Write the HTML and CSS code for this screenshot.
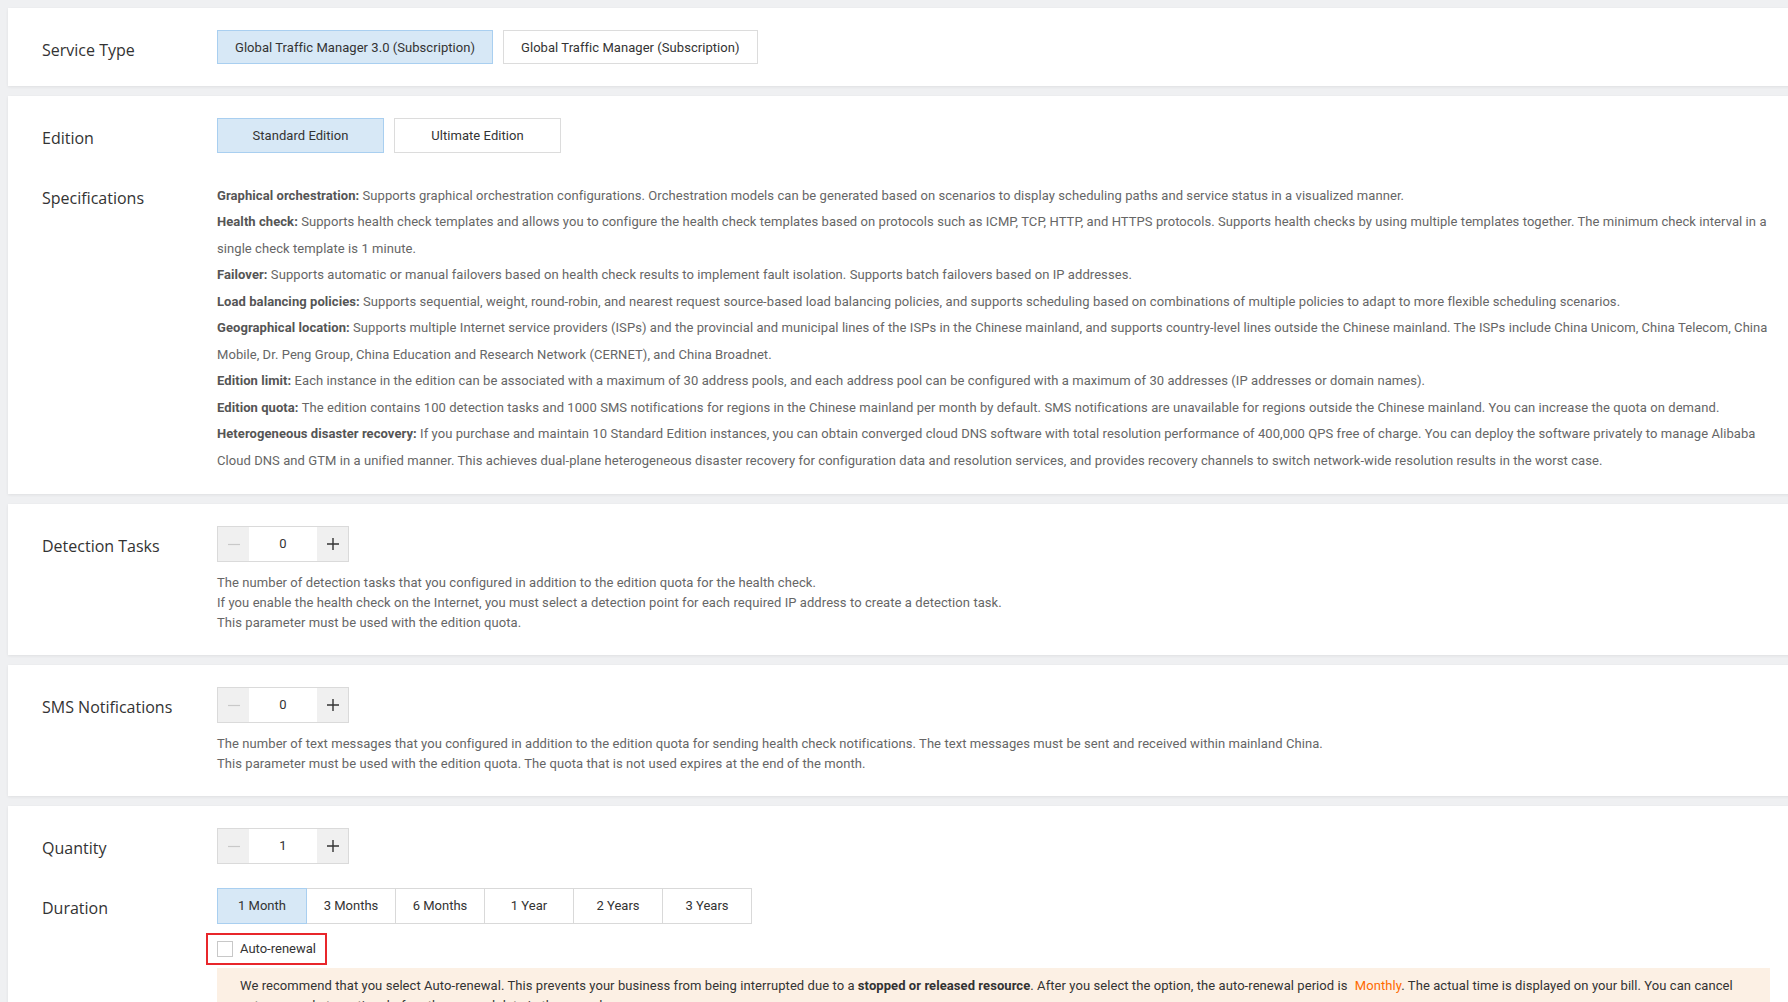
FILE: index.html
```html
<!DOCTYPE html>
<html lang="en">
<head>
<meta charset="utf-8">
<title>Global Traffic Manager</title>
<link rel="stylesheet" href="styles.css">
</head>
<body>
<div class="page">
  <section class="card">
    <div class="row">
      <div class="label">Service Type</div>
      <div class="content">
        <div class="opts">
          <div class="opt active">Global Traffic Manager 3.0 (Subscription)</div>
          <div class="opt">Global Traffic Manager (Subscription)</div>
        </div>
      </div>
    </div>
  </section>

  <section class="card card-edition">
    <div class="row">
      <div class="label">Edition</div>
      <div class="content">
        <div class="opts">
          <div class="opt opt-edition active">Standard Edition</div>
          <div class="opt opt-edition">Ultimate Edition</div>
        </div>
      </div>
    </div>
    <div class="row row-specs">
      <div class="label label-specs">Specifications</div>
      <div class="content">
        <div class="specs">
          <p><b>Graphical orchestration:</b> Supports graphical orchestration configurations. Orchestration models can be generated based on scenarios to display scheduling paths and service status in a visualized manner.</p>
          <p><b>Health check:</b> Supports health check templates and allows you to configure the health check templates based on protocols such as ICMP, TCP, HTTP, and HTTPS protocols. Supports health checks by using multiple templates together. The minimum check interval in a single check template is 1 minute.</p>
          <p><b>Failover:</b> Supports automatic or manual failovers based on health check results to implement fault isolation. Supports batch failovers based on IP addresses.</p>
          <p><b>Load balancing policies:</b> Supports sequential, weight, round-robin, and nearest request source-based load balancing policies, and supports scheduling based on combinations of multiple policies to adapt to more flexible scheduling scenarios.</p>
          <p><b>Geographical location:</b> Supports multiple Internet service providers (ISPs) and the provincial and municipal lines of the ISPs in the Chinese mainland, and supports country-level lines outside the Chinese mainland. The ISPs include China Unicom, China Telecom, China Mobile, Dr. Peng Group, China Education and Research Network (CERNET), and China Broadnet.</p>
          <p><b>Edition limit:</b> Each instance in the edition can be associated with a maximum of 30 address pools, and each address pool can be configured with a maximum of 30 addresses (IP addresses or domain names).</p>
          <p><b>Edition quota:</b> The edition contains 100 detection tasks and 1000 SMS notifications for regions in the Chinese mainland per month by default. SMS notifications are unavailable for regions outside the Chinese mainland. You can increase the quota on demand.</p>
          <p><b>Heterogeneous disaster recovery:</b> If you purchase and maintain 10 Standard Edition instances, you can obtain converged cloud DNS software with total resolution performance of 400,000 QPS free of charge. You can deploy the software privately to manage Alibaba Cloud DNS and GTM in a unified manner. This achieves dual-plane heterogeneous disaster recovery for configuration data and resolution services, and provides recovery channels to switch network-wide resolution results in the worst case.</p>
        </div>
      </div>
    </div>
  </section>

  <section class="card">
    <div class="row">
      <div class="label">Detection Tasks</div>
      <div class="content">
        <div class="stepper">
          <span class="step-btn step-minus"><svg width="14" height="14" viewBox="0 0 14 14"><path d="M1 7.5h12" stroke="#c9c9c9" stroke-width="1.2"/></svg></span>
          <span class="step-value">0</span>
          <span class="step-btn step-plus"><svg width="14" height="14" viewBox="0 0 14 14"><path d="M1 7h12M7 1v12" stroke="#333" stroke-width="1.4"/></svg></span>
        </div>
        <div class="desc">
          <p>The number of detection tasks that you configured in addition to the edition quota for the health check.</p>
          <p>If you enable the health check on the Internet, you must select a detection point for each required IP address to create a detection task.</p>
          <p>This parameter must be used with the edition quota.</p>
        </div>
      </div>
    </div>
  </section>

  <section class="card">
    <div class="row">
      <div class="label">SMS Notifications</div>
      <div class="content">
        <div class="stepper">
          <span class="step-btn step-minus"><svg width="14" height="14" viewBox="0 0 14 14"><path d="M1 7.5h12" stroke="#c9c9c9" stroke-width="1.2"/></svg></span>
          <span class="step-value">0</span>
          <span class="step-btn step-plus"><svg width="14" height="14" viewBox="0 0 14 14"><path d="M1 7h12M7 1v12" stroke="#333" stroke-width="1.4"/></svg></span>
        </div>
        <div class="desc">
          <p>The number of text messages that you configured in addition to the edition quota for sending health check notifications. The text messages must be sent and received within mainland China.</p>
          <p>This parameter must be used with the edition quota. The quota that is not used expires at the end of the month.</p>
        </div>
      </div>
    </div>
  </section>

  <section class="card">
    <div class="row">
      <div class="label">Quantity</div>
      <div class="content">
        <div class="stepper">
          <span class="step-btn step-minus"><svg width="14" height="14" viewBox="0 0 14 14"><path d="M1 7.5h12" stroke="#c9c9c9" stroke-width="1.2"/></svg></span>
          <span class="step-value">1</span>
          <span class="step-btn step-plus"><svg width="14" height="14" viewBox="0 0 14 14"><path d="M1 7h12M7 1v12" stroke="#333" stroke-width="1.4"/></svg></span>
        </div>
      </div>
    </div>
    <div class="row row-duration">
      <div class="label">Duration</div>
      <div class="content">
        <div class="seg">
          <span class="seg-item active">1 Month</span>
          <span class="seg-item">3 Months</span>
          <span class="seg-item">6 Months</span>
          <span class="seg-item">1 Year</span>
          <span class="seg-item">2 Years</span>
          <span class="seg-item">3 Years</span>
        </div>
        <label class="renew"><span class="check"></span>Auto-renewal</label>
        <div class="notice">We recommend that you select Auto-renewal. This prevents your business from being interrupted due to a <b>stopped or released resource</b>. After you select the option, the auto-renewal period is <span class="hl">Monthly</span>. The actual time is displayed on your bill. You can cancel auto-renewal at any time before the renewal date in the console.</div>
      </div>
    </div>
  </section>
</div>
</body>
</html>
```

FILE: styles.css
```css
* {
  box-sizing: border-box;
}

html,
body {
  margin: 0;
  height: 100%;
  overflow: hidden;
  background: #eff0f2;
}

p {
  margin: 0;
}

.page {
  padding: 8px 0 0 8px;
}

.card {
  background: #fff;
  margin: 0 -40px 10px 0;
  padding: 22px 0;
  box-shadow: 0 1px 3px rgba(0, 0, 0, 0.07);
}

.card-edition {
  padding-bottom: 20px;
}

.row {
  display: flex;
  align-items: flex-start;
}

.label {
  flex: none;
  width: 209px;
  padding: 10px 0 0 34px;
  font: 16px/20px "Open Sans", sans-serif;
  color: #333;
}

.content {
  flex: 1;
  min-width: 0;
}

.opts {
  display: flex;
  gap: 10px;
}

.opt {
  height: 34px;
  padding: 0 17px;
  border: 1px solid #dcdcdc;
  background: #fff;
  display: flex;
  align-items: center;
  justify-content: center;
  font: 13px "Roboto", sans-serif;
  letter-spacing: 0.05px;
  color: #333;
}

.opt.active {
  background: #d7e8f6;
  border-color: #a9cff0;
}

.opt-edition {
  min-width: 167px;
  height: 35px;
}

.row-specs {
  margin-top: 30px;
}

.label-specs {
  padding-top: 5px;
}

.specs {
  max-width: 1563px;
  font: 13px/26.45px "Roboto", sans-serif;
  letter-spacing: 0.07px;
  color: #666;
}

.specs b {
  color: #555;
  font-weight: 700;
}

.stepper {
  display: flex;
  width: 132px;
  height: 36px;
  border: 1px solid #dadada;
}

.step-btn {
  width: 31px;
  flex: none;
  background: #f0f0f0;
  display: flex;
  align-items: center;
  justify-content: center;
}

.step-value {
  flex: 1;
  display: flex;
  align-items: center;
  justify-content: center;
  background: #fff;
  font: 13px "Roboto", sans-serif;
  color: #333;
}

.desc {
  margin-top: 11px;
  font: 13px/20px "Roboto", sans-serif;
  letter-spacing: 0.07px;
  color: #666;
}

.row-duration {
  margin-top: 24px;
}

.seg {
  display: flex;
}

.seg-item {
  width: 90px;
  height: 36px;
  margin-left: -1px;
  border: 1px solid #d9d9d9;
  background: #fff;
  display: flex;
  align-items: center;
  justify-content: center;
  font: 13px "Roboto", sans-serif;
  color: #333;
}

.seg-item:first-child {
  margin-left: 0;
}

.seg-item.active {
  position: relative;
  background: #d7e8f6;
  border-color: #a9cff0;
}

.renew {
  display: inline-flex;
  align-items: center;
  gap: 7px;
  height: 32px;
  margin: 9px 0 0 -11px;
  padding: 0 9px;
  border: 2px solid #e8262b;
  font: 13px "Roboto", sans-serif;
  color: #333;
}

.check {
  width: 16px;
  height: 16px;
  border: 1px solid #c8c8c8;
  background: #fff;
}

.notice {
  margin-top: 3px;
  max-width: 1553px;
  padding: 8px 23px;
  background: #fcf0e4;
  font: 13px/20px "Roboto", sans-serif;
  letter-spacing: 0.07px;
  color: #333;
}

.notice b {
  font-weight: 700;
}

.hl {
  margin-left: 4px;
  color: #ff6a00;
}
```
